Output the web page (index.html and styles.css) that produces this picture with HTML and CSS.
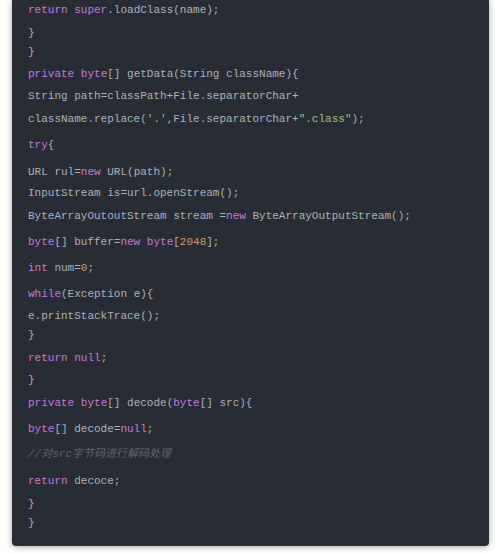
FILE: index.html
```html
<!DOCTYPE html>
<html>
<head>
<meta charset="utf-8">
<link rel="stylesheet" href="styles.css">
</head>
<body>
<div class="panel">
<div class="code">
<div class="ln"><span class="k">return</span> <span class="k">super</span>.loadClass(name);</div>
<div class="ln m4">}</div>
<div class="ln m0">}</div>
<div class="ln m3"><span class="k">private</span> <span class="k">byte</span>[] getData(String className){</div>
<div class="ln m3">String path=classPath+File.separatorChar+</div>
<div class="ln m4">className.replace(<span class="s">'.'</span>,File.separatorChar+<span class="s">".class"</span>);</div>
<div class="ln m7"><span class="k">try</span>{</div>
<div class="ln m8">URL rul=<span class="k">new</span> URL(path);</div>
<div class="ln m2">InputStream is=url.openStream();</div>
<div class="ln m4">ByteArrayOutoutStream stream =<span class="k">new</span> ByteArrayOutputStream();</div>
<div class="ln m7"><span class="k">byte</span>[] buffer=<span class="k">new</span> <span class="k">byte</span>[<span class="n">2048</span>];</div>
<div class="ln m7"><span class="k">int</span> num=<span class="n">0</span>;</div>
<div class="ln m7"><span class="k">while</span>(Exception e){</div>
<div class="ln m3">e.printStackTrace();</div>
<div class="ln m0">}</div>
<div class="ln m4"><span class="k">return</span> <span class="k">null</span>;</div>
<div class="ln m3">}</div>
<div class="ln m4"><span class="k">private</span> <span class="k">byte</span>[] decode(<span class="k">byte</span>[] src){</div>
<div class="ln m7"><span class="k">byte</span>[] decode=<span class="k">null</span>;</div>
<div class="ln m6"><span class="c">//对src字节码进行解码处理</span></div>
<div class="ln m8"><span class="k">return</span> decoce;</div>
<div class="ln m4">}</div>
<div class="ln m0">}</div>
</div>
</div>
</body>
</html>
```
FILE: styles.css
```css
html, body {
  margin: 0;
  padding: 0;
  background: #ffffff;
}
body {
  padding: 0 6px 8px 12px;
}
.panel {
  background: #282c34;
  border-radius: 0 0 4px 4px;
  box-shadow: 0 1px 6px rgba(0, 0, 0, 0.35);
  padding: 1px 16px 13px 16px;
}
.code {
  font-family: "Liberation Mono", "DejaVu Sans Mono", "Noto Sans CJK SC", monospace;
  font-size: 11px;
  color: #abb2bf;
}
.ln {
  line-height: 19px;
  height: 19px;
  white-space: pre;
}
.m0 { margin-top: 0; }
.m2 { margin-top: 2px; }
.m3 { margin-top: 3px; }
.m4 { margin-top: 4px; }
.m6 { margin-top: 6px; }
.m7 { margin-top: 7px; }
.m8 { margin-top: 8px; }
.k { color: #c678dd; }
.s { color: #98c379; }
.n { color: #d19a66; }
.c { color: #5c6370; font-style: italic; }
```
